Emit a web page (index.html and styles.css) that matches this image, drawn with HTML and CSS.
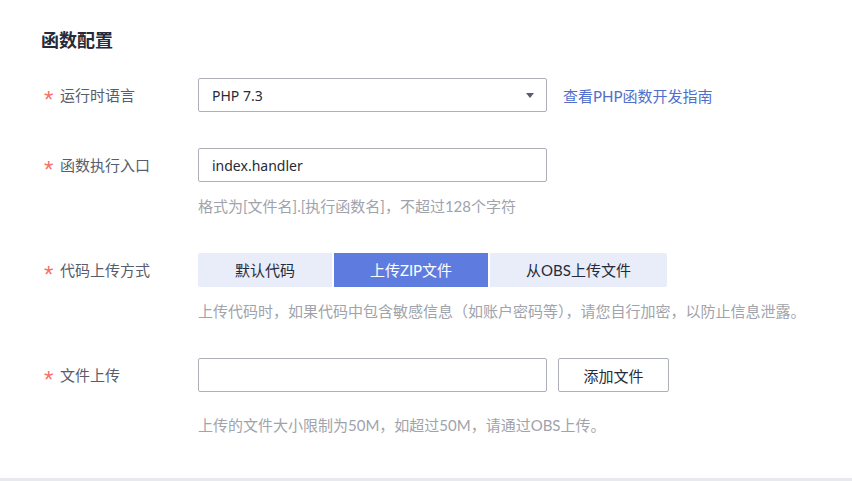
FILE: index.html
```html
<!DOCTYPE html>
<html lang="zh-CN">
<head>
<meta charset="utf-8">
<title>函数配置</title>
<link rel="stylesheet" href="styles.css">
</head>
<body>
<div class="page">
  <h2 class="title">函数配置</h2>

  <div class="form-item">
    <label class="label"><span class="req">*</span>运行时语言</label>
    <div class="control">
      <div class="row">
        <div class="select">
          <span class="latin">PHP 7.3</span>
          <svg class="caret" width="8" height="5" viewBox="0 0 8 5"><path d="M0 0H8L4 5Z" fill="#575d6c"/></svg>
        </div>
        <a class="link" href="#">查看PHP函数开发指南</a>
      </div>
    </div>
  </div>

  <div class="form-item">
    <label class="label"><span class="req">*</span>函数执行入口</label>
    <div class="control">
      <div class="input"><span class="latin">index.handler</span></div>
      <div class="hint">格式为[文件名].[执行函数名]，不超过128个字符</div>
    </div>
  </div>

  <div class="form-item">
    <label class="label"><span class="req">*</span>代码上传方式</label>
    <div class="control">
      <div class="tabs">
        <div class="tab tab-1">默认代码</div>
        <div class="tab tab-2 active">上传ZIP文件</div>
        <div class="tab tab-3">从OBS上传文件</div>
      </div>
      <div class="hint">上传代码时，如果代码中包含敏感信息（如账户密码等），请您自行加密，以防止信息泄露。</div>
    </div>
  </div>

  <div class="form-item">
    <label class="label"><span class="req">*</span>文件上传</label>
    <div class="control">
      <div class="row">
        <div class="input"></div>
        <button class="btn" type="button">添加文件</button>
      </div>
      <div class="hint hint-lg">上传的文件大小限制为50M，如超过50M，请通过OBS上传。</div>
    </div>
  </div>
</div>
</body>
</html>
```

FILE: styles.css
```css
* { box-sizing: border-box; }
html, body { margin: 0; padding: 0; }
body {
  background: #e8e9ee;
  font-family: Lato, "Noto Sans CJK SC", sans-serif;
  font-size: 15px;
  color: #252b3a;
}
.page {
  background: #fff;
  height: 478px;
  padding: 28px 0 0 41px;
}
.title {
  margin: 0 0 26px;
  font-size: 18px;
  line-height: 24px;
  font-weight: 700;
  color: #252b3a;
}
.form-item {
  display: flex;
  margin-bottom: 36px;
}
.label {
  width: 157px;
  flex: none;
  padding-left: 3px;
  height: 34px;
  line-height: 34px;
  color: #575d6c;
  display: flex;
  align-items: center;
}
.req {
  color: #f66f6a;
  font-family: "Liberation Sans", sans-serif;
  font-size: 24px;
  line-height: 24px;
  height: 24px;
  width: 16px;
  margin-top: 9px;
  display: block;
}
.control { flex: none; }
.row { display: flex; align-items: center; }
.latin { font-family: "Noto Sans", sans-serif; font-size: 14px; }
.select, .input {
  width: 349px;
  height: 34px;
  border: 1px solid #adb0b8;
  border-radius: 2px;
  padding: 0 12px 0 13px;
  display: flex;
  align-items: center;
  justify-content: space-between;
  color: #252b3a;
}
.caret { display: block; }
.link {
  margin-left: 16px;
  color: #526ecc;
  text-decoration: none;
}
.hint {
  margin-top: 13px;
  line-height: 22px;
  color: #a0a3ab;
}
.hint-lg { margin-top: 22px; }
.tabs { display: flex; gap: 2px; }
.tab {
  height: 34px;
  line-height: 34px;
  text-align: center;
  background: #e9edfa;
  color: #252b3a;
}
.tab-1 { width: 134px; border-radius: 2px 0 0 2px; }
.tab-2 { width: 154px; }
.tab-3 { width: 177px; border-radius: 0 2px 2px 0; }
.tab.active { background: #5e7ce0; color: #fff; }
.btn {
  margin-left: 11px;
  width: 111px;
  height: 34px;
  border: 1px solid #adb0b8;
  border-radius: 2px;
  background: #fff;
  font: inherit;
  color: #252b3a;
  padding: 0;
}
```
